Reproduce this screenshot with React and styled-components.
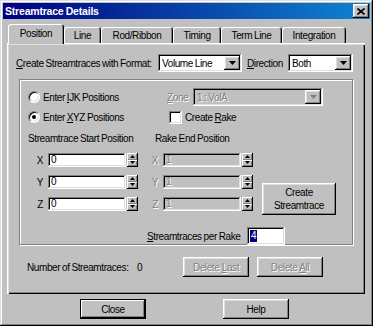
import styled, { createGlobalStyle, css } from "styled-components";

const GlobalStyle = createGlobalStyle`
  html, body {
    margin: 0;
    padding: 0;
    background: #c0c0c0;
  }
  body {
    font-family: "Liberation Sans", Arial, sans-serif;
    font-size: 10px;
    letter-spacing: -0.4px;
    word-spacing: -0.5px;
    color: #000;
  }
  * {
    box-sizing: border-box;
  }
`;

const raised = css`
  box-shadow: inset -1px -1px #000, inset 1px 1px #fff, inset -2px -2px #808080,
    inset 2px 2px #dfdfdf;
`;
const sunken = css`
  box-shadow: inset -1px -1px #fff, inset 1px 1px #808080, inset -2px -2px #dfdfdf,
    inset 2px 2px #000;
`;
const greyed = css`
  color: #808080;
  text-shadow: 1px 1px 0 #fff;
`;

const tabs = [
  { label: "Position", w: 56, active: true },
  { label: "Line", w: 37 },
  { label: "Rod/Ribbon", w: 72 },
  { label: "Timing", w: 48 },
  { label: "Term Line", w: 61 },
  { label: "Integration", w: 64 },
];

const axes = ["X", "Y", "Z"];

function DownArrow({ color = "#000" }) {
  return (
    <svg width="7" height="4" viewBox="0 0 7 4">
      <path d="M0 0h7L3.5 4z" fill={color} />
    </svg>
  );
}

function SpinArrow({ up }) {
  return (
    <svg width="5" height="3" viewBox="0 0 5 3">
      <path d={up ? "M0 3h5L2.5 0z" : "M0 0h5L2.5 3z"} fill="#000" />
    </svg>
  );
}

function Spinner() {
  return (
    <Spin>
      <SpinHalf>
        <SpinArrow up />
      </SpinHalf>
      <SpinHalf>
        <SpinArrow />
      </SpinHalf>
    </Spin>
  );
}

export default function App() {
  return (
    <>
      <GlobalStyle />
      <Window>
        <TitleBar>
          <TitleText>Streamtrace Details</TitleText>
          <CloseBox>
            <svg width="8" height="7" viewBox="0 0 8 7">
              <path d="M0.5 0.5l7 6M7.5 0.5l-7 6" stroke="#000" strokeWidth="1.6" />
            </svg>
          </CloseBox>
        </TitleBar>

        <Body>
          <TabStrip>
            {tabs.map((t) => (
              <Tab key={t.label} $w={t.w} $active={t.active}>
                {t.label}
              </Tab>
            ))}
          </TabStrip>

          <Panel>
            <FormatRow>
              <Text $w={142}>
                <U>C</U>reate Streamtraces with Format:
              </Text>
              <Combo $w={84}>
                <ComboText>Volume Line</ComboText>
                <ComboArrow>
                  <DownArrow />
                </ComboArrow>
              </Combo>
              <Text $w={46} $pad={5}>
                <U>D</U>irection
              </Text>
              <Combo $w={65}>
                <ComboText>Both</ComboText>
                <ComboArrow>
                  <DownArrow />
                </ComboArrow>
              </Combo>
            </FormatRow>

            <Group>
              <GroupRow $h={18}>
                <Choice $w={139}>
                  <Radio />
                  <span>
                    Enter <U>I</U>JK Positions
                  </span>
                </Choice>
                <Text $w={26} $disabled>
                  <U>Z</U>one
                </Text>
                <Combo $w={130} $disabled>
                  <ComboText $disabled>1 : VolA</ComboText>
                  <ComboArrow>
                    <DownArrow color="#808080" />
                  </ComboArrow>
                </Combo>
              </GroupRow>

              <GroupRow $h={14} $top={4}>
                <Choice $w={141}>
                  <Radio $checked />
                  <span>
                    Enter <U>X</U>YZ Positions
                  </span>
                </Choice>
                <Choice>
                  <Check />
                  <span>
                    Create <U>R</U>ake
                  </span>
                </Choice>
              </GroupRow>

              <GroupRow $h={14} $top={7}>
                <Text $w={127}>Streamtrace Start Position</Text>
                <Text>Rake End Position</Text>
              </GroupRow>

              <CoordArea>
                <CoordRows>
                  {axes.map((axis) => (
                    <CoordRow key={axis}>
                      <Axis $w={20}>{axis}</Axis>
                      <Field>0</Field>
                      <Spinner />
                      <Axis $w={25} $disabled>
                        {axis}
                      </Axis>
                      <Field $disabled>1</Field>
                      <Spinner />
                    </CoordRow>
                  ))}
                </CoordRows>
                <CreateButton>
                  Create
                  <br />
                  Streamtrace
                </CreateButton>
              </CoordArea>

              <PerRakeRow>
                <Text $w={100}>
                  <U>S</U>treamtraces per Rake
                </Text>
                <SmallField>
                  <Selected>4</Selected>
                </SmallField>
              </PerRakeRow>
            </Group>

            <CountRow>
              <Text $w={110}>Number of Streamtraces:</Text>
              <Text $w={46}>0</Text>
              <Button $disabled>
                <span>
                  Delete <U>L</U>ast
                </span>
              </Button>
              <Button $disabled>
                <span>
                  Delete <U>A</U>ll
                </span>
              </Button>
            </CountRow>
          </Panel>

          <ButtonRow>
            <Button $default>Close</Button>
            <Button>Help</Button>
          </ButtonRow>
        </Body>
      </Window>
    </>
  );
}

const Window = styled.div`
  width: 373px;
  height: 326px;
  padding: 3px;
  background: #c0c0c0;
  display: flex;
  flex-direction: column;
  box-shadow: inset -1px -1px #000, inset 1px 1px #dfdfdf, inset -2px -2px #808080,
    inset 2px 2px #fff;
`;

const TitleBar = styled.div`
  height: 16px;
  display: flex;
  align-items: center;
  justify-content: space-between;
  padding: 0 1px 0 2px;
  background: linear-gradient(to right, #000080, #1084d0);
`;

const TitleText = styled.span`
  color: #fff;
  font-weight: bold;
  font-size: 10.5px;
  letter-spacing: -0.2px;
`;

const CloseBox = styled.div`
  width: 16px;
  height: 14px;
  display: flex;
  align-items: center;
  justify-content: center;
  background: #c0c0c0;
  ${raised};
`;

const Body = styled.div`
  flex: 1;
  display: flex;
  flex-direction: column;
  padding: 5px 0 0 4px;
`;

const TabStrip = styled.div`
  height: 20px;
  margin-left: 1px;
  display: flex;
  align-items: flex-end;
  position: relative;
  z-index: 1;
`;

const Tab = styled.div`
  width: ${(p) => p.$w}px;
  height: ${(p) => (p.$active ? 20 : 16)}px;
  margin-bottom: ${(p) => (p.$active ? 0 : 1)}px;
  padding-top: ${(p) => (p.$active ? 4 : 3)}px;
  display: flex;
  justify-content: center;
  white-space: nowrap;
  background: #c0c0c0;
  border-radius: 3px 3px 0 0;
  box-shadow: inset 1px 1px #fff, inset -1px 0 #000, inset -2px 0 #808080;
`;

const Panel = styled.div`
  width: 358px;
  height: 251px;
  margin-top: -1px;
  display: flex;
  flex-direction: column;
  box-shadow: inset 1px 1px #fff, inset 2px 2px #dfdfdf, inset -1px -1px #000,
    inset -2px -2px #808080;
`;

const Text = styled.span`
  flex: none;
  white-space: nowrap;
  ${(p) => p.$w && `width: ${p.$w}px;`}
  ${(p) => p.$pad && `padding-left: ${p.$pad}px;`}
  ${(p) => p.$disabled && greyed};
`;

const U = styled.span`
  text-decoration: underline;
`;

const FormatRow = styled.div`
  height: 18px;
  margin: 11px 0 0 9px;
  display: flex;
  align-items: center;
`;

const Combo = styled.div`
  width: ${(p) => p.$w}px;
  height: 18px;
  flex: none;
  display: flex;
  align-items: center;
  padding: 2px;
  background: ${(p) => (p.$disabled ? "#c0c0c0" : "#fff")};
  ${sunken};
`;

const ComboText = styled.span`
  flex: 1;
  padding-left: 2px;
  white-space: nowrap;
  overflow: hidden;
  ${(p) => p.$disabled && greyed};
`;

const ComboArrow = styled.div`
  width: 16px;
  height: 14px;
  flex: none;
  display: flex;
  align-items: center;
  justify-content: center;
  background: #c0c0c0;
  ${raised};
`;

const Group = styled.div`
  width: 334px;
  height: 166px;
  margin: 7px 0 0 12px;
  padding: 8px 0 0 8px;
  border: 1px solid #808080;
  box-shadow: inset 1px 1px #fff, 1px 1px #fff;
`;

const GroupRow = styled.div`
  height: ${(p) => p.$h}px;
  margin-top: ${(p) => p.$top || 0}px;
  display: flex;
  align-items: center;
`;

const Choice = styled.div`
  ${(p) => p.$w && `width: ${p.$w}px;`}
  flex: none;
  display: flex;
  align-items: center;
  gap: 3px;
  white-space: nowrap;
`;

const Radio = styled.span`
  width: 12px;
  height: 12px;
  border-radius: 50%;
  display: flex;
  align-items: center;
  justify-content: center;
  background: #fff;
  border: 1px solid;
  border-color: #808080 #fff #fff #808080;
  box-shadow: inset 1px 1px #000, inset -1px -1px #dfdfdf;
  &::after {
    content: "";
    width: 4px;
    height: 4px;
    border-radius: 50%;
    background: ${(p) => (p.$checked ? "#000" : "transparent")};
  }
`;

const Check = styled.span`
  width: 13px;
  height: 13px;
  background: #fff;
  ${sunken};
`;

const CoordArea = styled.div`
  margin-top: 8px;
  display: flex;
  align-items: flex-start;
`;

const CoordRows = styled.div`
  display: flex;
  flex-direction: column;
  gap: 8px;
`;

const CoordRow = styled.div`
  height: 14px;
  display: flex;
  align-items: center;
`;

const Axis = styled.span`
  width: ${(p) => p.$w}px;
  text-align: right;
  padding-right: 5px;
  ${(p) => p.$disabled && greyed};
`;

const Field = styled.div`
  width: 78px;
  height: 14px;
  padding: 1px 3px 0;
  line-height: 12px;
  overflow: hidden;
  background: ${(p) => (p.$disabled ? "#c0c0c0" : "#fff")};
  ${sunken};
  ${(p) => p.$disabled && greyed};
`;

const Spin = styled.div`
  width: 11px;
  height: 14px;
  margin-left: 1px;
  display: flex;
  flex-direction: column;
  background: #000;
  padding: 0 1px 1px 0;
`;

const SpinHalf = styled.div`
  flex: 1;
  display: flex;
  align-items: center;
  justify-content: center;
  background: #c0c0c0;
  box-shadow: inset 1px 1px #fff, inset -1px -1px #808080;
`;

const CreateButton = styled.div`
  width: 74px;
  height: 32px;
  margin: 30px 0 0 9px;
  display: flex;
  align-items: center;
  justify-content: center;
  text-align: center;
  line-height: 13px;
  background: #c0c0c0;
  ${raised};
`;

const PerRakeRow = styled.div`
  height: 18px;
  margin-top: 12px;
  padding-left: 119px;
  display: flex;
  align-items: center;
`;

const SmallField = styled.div`
  width: 38px;
  height: 18px;
  padding: 2px 3px;
  display: flex;
  align-items: center;
  background: #fff;
  ${sunken};
`;

const Selected = styled.span`
  background: #000080;
  color: #fff;
  line-height: 12px;
  padding: 0 1px;
`;

const CountRow = styled.div`
  height: 20px;
  margin: 12px 0 0 20px;
  display: flex;
  align-items: center;
  & > button + button {
    margin-left: 8px;
  }
`;

const Button = styled.button`
  width: 66px;
  height: 20px;
  padding: 0;
  font: inherit;
  letter-spacing: inherit;
  color: #000;
  background: #c0c0c0;
  border: none;
  white-space: nowrap;
  ${(p) =>
    p.$default
      ? css`
          box-shadow: inset 0 0 0 1px #000, inset -2px -2px #000, inset 2px 2px #fff,
            inset -3px -3px #808080;
        `
      : raised};
  ${(p) => p.$disabled && greyed};
`;

const ButtonRow = styled.div`
  height: 20px;
  margin-top: 5px;
  padding-left: 73px;
  display: flex;
  gap: 77px;
`;
